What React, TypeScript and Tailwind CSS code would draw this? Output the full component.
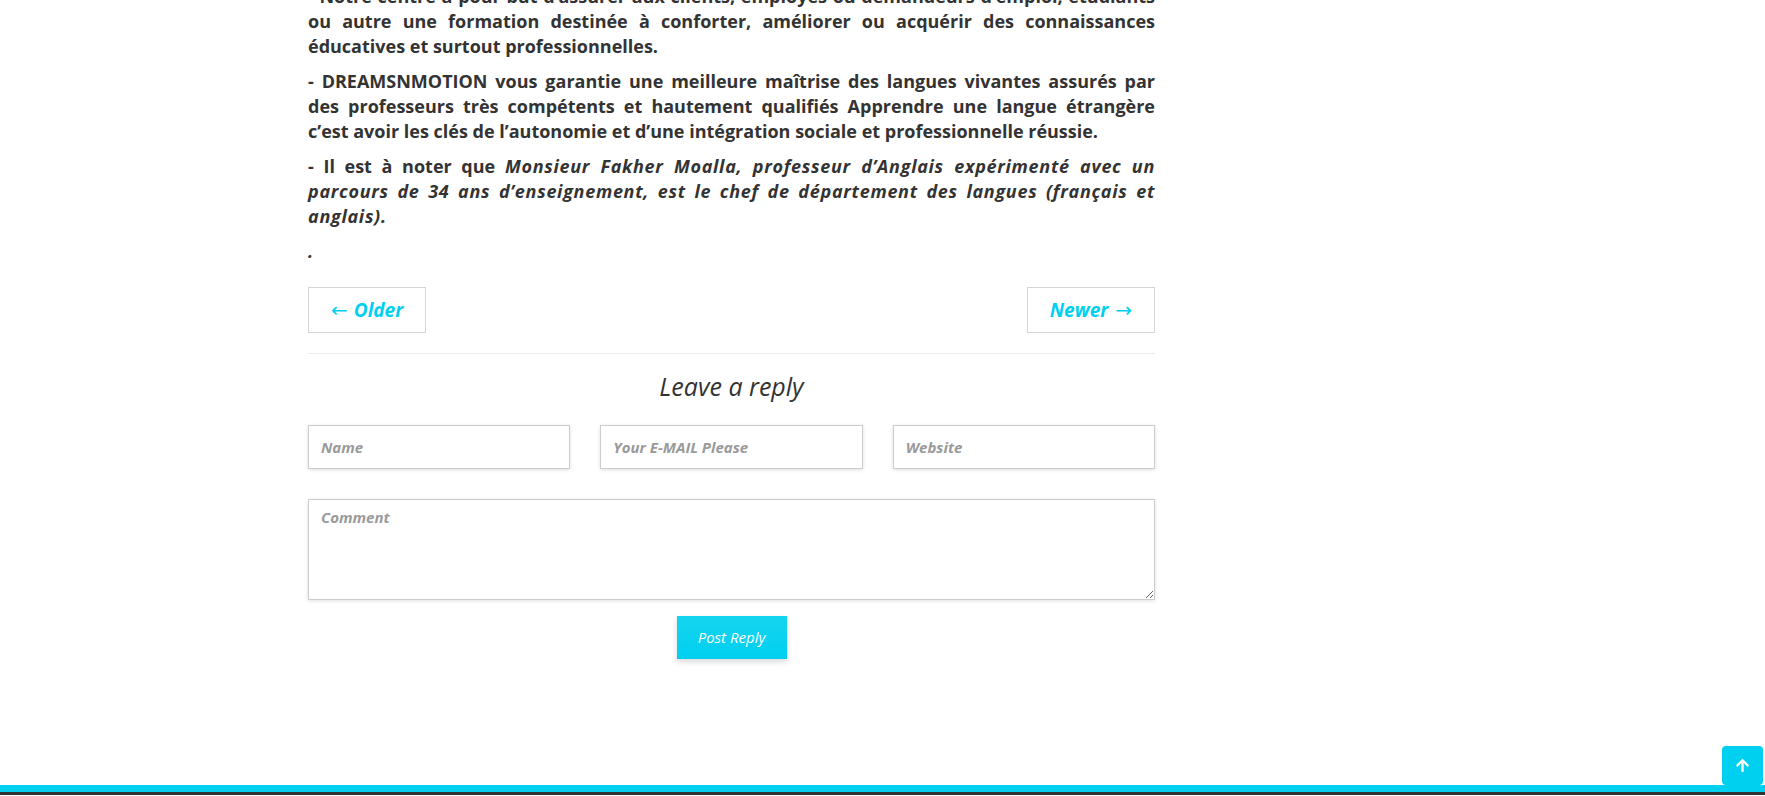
import React from 'react';
import { FaArrowUp } from 'react-icons/fa';

const CYAN = 'text-[#00d0f0]';

const Paragraphs = () => (
  <div className="text-[18px] leading-[25px] font-bold text-[#333] text-justify">
    <p className="mb-[10px]">
      - Notre centre a pour but d’assurer aux clients, employés ou demandeurs d’emploi, étudiants ou autre une
      formation destinée à conforter, améliorer ou acquérir des connaissances éducatives et surtout professionnelles.
    </p>
    <p className="mb-[10px]">
      - DREAMSNMOTION vous garantie une meilleure maîtrise des langues vivantes assurés par des professeurs très
      compétents et hautement qualifiés Apprendre une langue étrangère c’est avoir les clés de l’autonomie et d’une
      intégration sociale et professionnelle réussie.
    </p>
    <p className="mb-[10px]">
      - Il est à noter que{' '}
      <em className="tracking-[0.7px]">
        Monsieur Fakher Moalla, professeur d’Anglais expérimenté avec un parcours de 34 ans d’enseignement, est le chef
        de département des langues (français et anglais).
      </em>
    </p>
    <p>
      <em>.</em>
    </p>
  </div>
);

const PostNav = () => (
  <div className="mt-[23px] flex justify-between">
    <a className={`h-[46px] flex items-center px-[22px] border border-[#d6d6d6] text-[19px] font-bold italic ${CYAN}`}>
      <span className="font-['DejaVu_Sans'] not-italic font-normal text-[20px] mr-[6px]">←</span>
      Older
    </a>
    <a className={`h-[46px] flex items-center px-[22px] border border-[#d6d6d6] text-[19px] font-bold italic ${CYAN}`}>
      Newer
      <span className="font-['DejaVu_Sans'] not-italic font-normal text-[20px] ml-[7px]">→</span>
    </a>
  </div>
);

const ReplyForm = () => {
  const field =
    'h-[44px] w-full border border-[#ccc] bg-white px-[12px] text-[15px] font-bold italic text-[#555] placeholder:text-[#9a9a9a] shadow-[0_1px_4px_rgba(0,0,0,0.12)] outline-none';

  return (
    <div>
      <div className="mt-[20px] border-t border-[#ececec]" />
      <h3 className="mt-[17px] text-center text-[25px] leading-[30px] italic font-normal text-[#333]">
        Leave a reply
      </h3>
      <div className="mt-[24px] grid grid-cols-3 gap-[30px]">
        <input className={field} placeholder="Name" />
        <input className={field} placeholder="Your E-MAIL Please" />
        <input className={field} placeholder="Website" />
      </div>
      <textarea
        className="mt-[30px] block h-[101px] w-full border border-[#ccc] bg-white px-[12px] py-[6px] text-[15px] font-bold italic text-[#555] placeholder:text-[#9a9a9a] shadow-[0_1px_4px_rgba(0,0,0,0.12)] outline-none"
        placeholder="Comment"
      />
      <div className="mt-[16px] flex justify-center">
        <button className="h-[43px] w-[110px] bg-gradient-to-b from-[#14d5ef] to-[#00cff0] text-white text-[15px] italic font-normal shadow-[0_3px_6px_rgba(0,0,0,0.15)]">
          Post Reply
        </button>
      </div>
    </div>
  );
};

export default function App() {
  return (
    <div className="bg-white font-['Open_Sans',sans-serif] overflow-hidden">
      <div className="mx-auto w-[1179px] px-[15px] flex">
        <main className="w-[847px] -mt-[16px]">
          <Paragraphs />
          <PostNav />
          <ReplyForm />
        </main>
        <aside className="flex-1" />
      </div>

      <footer className="mt-[126px] border-t-[7px] border-[#00d0f0] bg-[#333] h-[10px]" />

      <a className="fixed right-[2px] bottom-[11px] w-[41px] h-[39px] rounded-[4px] bg-[#00d0f0] flex items-center justify-center text-white">
        <FaArrowUp size={15} />
      </a>
    </div>
  );
}
